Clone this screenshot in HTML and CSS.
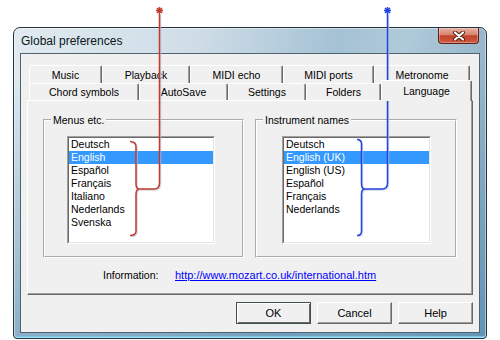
FILE: index.html
```html
<!DOCTYPE html>
<html lang="en">
<head>
<meta charset="UTF-8">
<title>Global preferences</title>
<link rel="stylesheet" href="styles.css">
</head>
<body>

<div class="window">
  <div class="titlebar">
    <span class="title">Global preferences</span>
    <button class="close" title="Close">
      <svg width="14" height="10" viewBox="0 0 14 10">
        <path d="M3 1.5 L11 8.5 M11 1.5 L3 8.5" stroke="#4a1a12" stroke-width="4" stroke-linecap="round"/>
        <path d="M3 1.5 L11 8.5 M11 1.5 L3 8.5" stroke="#fff" stroke-width="2.2" stroke-linecap="round"/>
      </svg>
    </button>
  </div>

  <div class="client">
    <div class="tabs">
      <div class="tab-row">
        <div class="tab tab-music">Music</div>
        <div class="tab tab-playback">Playback</div>
        <div class="tab tab-echo">MIDI echo</div>
        <div class="tab tab-ports">MIDI ports</div>
        <div class="tab tab-metronome">Metronome</div>
      </div>
      <div class="tab-row tab-row-front">
        <div class="tab tab-chord">Chord symbols</div>
        <div class="tab tab-autosave">AutoSave</div>
        <div class="tab tab-settings">Settings</div>
        <div class="tab tab-folders">Folders</div>
        <div class="tab tab-language selected">Language</div>
      </div>
    </div>

    <div class="page">
      <div class="groups">
        <fieldset class="group group-menus">
          <legend>Menus etc.</legend>
          <div class="listbox">
            <ul>
              <li>Deutsch</li>
              <li class="sel">English</li>
              <li>Español</li>
              <li>Français</li>
              <li>Italiano</li>
              <li>Nederlands</li>
              <li>Svenska</li>
            </ul>
          </div>
        </fieldset>
        <fieldset class="group group-instr">
          <legend>Instrument names</legend>
          <div class="listbox">
            <ul>
              <li>Deutsch</li>
              <li class="sel">English (UK)</li>
              <li>English (US)</li>
              <li>Español</li>
              <li>Français</li>
              <li>Nederlands</li>
            </ul>
          </div>
        </fieldset>
      </div>

      <div class="info">
        <span class="info-label">Information:</span>
        <a class="info-link" href="#">http://www.mozart.co.uk/international.htm</a>
      </div>
    </div>

    <div class="buttons">
      <button class="btn btn-default">OK</button>
      <button class="btn">Cancel</button>
      <button class="btn">Help</button>
    </div>
  </div>
</div>

<svg class="notes" width="500" height="340" viewBox="0 0 500 340">
  <g fill="none" stroke="#b8c8dc" stroke-width="1.5" transform="translate(1 1)" opacity="0.7">
    <path d="M159.5 14 V183 Q159.5 189 154 189 H139.5"/>
    <path d="M130 141.5 Q136 141.5 136 147 V184 Q136 189 139.5 189 Q136 189 136 194 V231 Q136 235.5 130 235.5"/>
    <path d="M387.5 14 V183 Q387.5 189 382 189 H365"/>
    <path d="M357 139.5 Q361.5 139.5 361.5 144 V184 Q361.5 189 365 189 Q361.5 189 361.5 194 V231 Q361.5 235.5 357 235.5"/>
  </g>
  <g fill="none" stroke="#c23a2a" stroke-width="1.5">
    <path d="M159.5 14 V183 Q159.5 189 154 189 H139.5"/>
    <path d="M130 141.5 Q136 141.5 136 147 V184 Q136 189 139.5 189 Q136 189 136 194 V231 Q136 235.5 130 235.5"/>
    <path d="M156 10.5 H163 M159.5 7 V14 M157 8 L162 13 M162 8 L157 13"/>
  </g>
  <g fill="none" stroke="#2442e0" stroke-width="1.5">
    <path d="M387.5 14 V183 Q387.5 189 382 189 H365"/>
    <path d="M357 139.5 Q361.5 139.5 361.5 144 V184 Q361.5 189 365 189 Q361.5 189 361.5 194 V231 Q361.5 235.5 357 235.5"/>
    <path d="M384 10.5 H391 M387.5 7 V14 M385 8 L390 13 M390 8 L385 13"/>
  </g>
</svg>

</body>
</html>
```

FILE: styles.css
```css
*, *::before, *::after { box-sizing: border-box; }
body {
  margin: 0;
  width: 500px;
  height: 340px;
  overflow: hidden;
  position: relative;
  background: #fff;
  font-family: 'Liberation Sans', Arial, sans-serif;
  font-size: 10.5px;
  color: #000;
}

/* window frame */
.window {
  margin: 27px 0 0 13px;
  width: 474px;
  height: 312px;
  border: 1px solid #26343d;
  border-radius: 7px 7px 4px 4px;
  display: flex;
  flex-direction: column;
  background:
    linear-gradient(to bottom, transparent 0, transparent 45px, rgba(70, 130, 170, 0.55) 100%),
    linear-gradient(100deg, #e0eaf0 0%, #cfdde7 35%, #a4c2d4 62%, #b0cad9 75%, #86aac1 100%);
  box-shadow: inset 0 0 0 1px rgba(255, 255, 255, 0.45), inset 0 -2px #6fc8e6;
}
.titlebar {
  height: 25px;
  display: flex;
  justify-content: space-between;
  padding: 0 7px 0 7px;
}
.title {
  font-size: 12px;
  line-height: 27px;
  color: #0b1620;
}
.close {
  width: 41px;
  height: 16px;
  padding: 0;
  border: 1px solid #5e2016;
  border-top: none;
  border-radius: 0 0 4px 4px;
  background: linear-gradient(#eab0a2 0%, #d98371 45%, #c0432b 52%, #d2593f 100%);
  box-shadow: inset 0 0 0 1px rgba(255, 255, 255, 0.3);
  display: flex;
  align-items: center;
  justify-content: center;
}
.close svg { display: block; }

.client {
  margin: 0 6px;
  height: 280px;
  border: 1px solid #4f6270;
  background: #f0f0f0;
  padding: 11px 6px 0;
}

/* tabs */
.tabs { height: 35px; }
.tab-row { display: flex; height: 18px; padding-left: 2px; }
.tab-row-front { height: 17px; }
.tab {
  display: flex;
  align-items: center;
  justify-content: center;
  background: #f0f0f0;
  border-top: 1px solid #fff;
  border-left: 1px solid #fff;
  border-right: 1px solid #696969;
  border-radius: 2px 2px 0 0;
  box-shadow: inset -1px 0 #a0a0a0;
}
.tab-music { width: 73px; }
.tab-playback { width: 88px; }
.tab-echo { width: 93px; }
.tab-ports { width: 91px; }
.tab-metronome { width: 96px; }
.tab-chord { width: 110px; }
.tab-autosave { width: 89px; }
.tab-settings { width: 78px; }
.tab-folders { width: 75px; }
.tab-language { width: 91px; }
.tab.selected {
  align-self: flex-start;
  height: 21px;
  margin-top: -3px;
  padding-bottom: 1px;
  position: relative;
  z-index: 1;
}

.page {
  width: 446px;
  height: 195px;
  border: 1px solid;
  border-color: #fff #696969 #696969 #fff;
  box-shadow: inset -1px -1px #a0a0a0;
  padding: 12px 0 0 15px;
}
.groups { display: flex; gap: 11px; }
.group {
  margin: 0;
  padding: 0;
  min-width: 0;
  height: 145px;
  border: 2px groove #fff;
}
.group-menus { width: 201px; }
.group-instr { width: 202px; }
.group legend {
  margin-left: 6px;
  padding: 0 2px;
  line-height: 14px;
}

.listbox {
  margin: 9px 0 0 22px;
  width: 148px;
  height: 108px;
  background: #fff;
  border: 1px solid;
  border-color: #a0a0a0 #fff #fff #a0a0a0;
}
.group-instr .listbox { margin-left: 25px; width: 149px; }
.listbox ul {
  margin: 0;
  padding: 0;
  list-style: none;
  height: 100%;
  border: 1px solid;
  border-color: #696969 #e3e3e3 #e3e3e3 #696969;
}
.listbox li { height: 13px; line-height: 13px; padding-left: 2px; white-space: nowrap; }
.listbox li.sel { background: #3399ff; color: #fff; }

.info {
  display: flex;
  margin-top: 11px;
  padding-left: 60px;
  line-height: 13px;
}
.info-label { width: 72px; }
.info-link { color: #0000ff; text-decoration: underline; font-size: 11px; }

/* dialog buttons */
.buttons {
  display: flex;
  justify-content: flex-end;
  gap: 6px;
  margin-top: 7px;
}
.btn {
  width: 75px;
  height: 22px;
  padding: 0;
  font: inherit;
  font-size: 11px;
  color: #000;
  background: #f0f0f0;
  border: 1px solid;
  border-color: #fff #696969 #696969 #fff;
  box-shadow: inset -1px -1px #a0a0a0;
}
.btn-default {
  border-color: #3f4f52;
  box-shadow: inset 1px 1px #fff, inset -1px -1px #696969;
}

.notes {
  position: absolute;
  top: 0;
  left: 0;
  pointer-events: none;
}
```
